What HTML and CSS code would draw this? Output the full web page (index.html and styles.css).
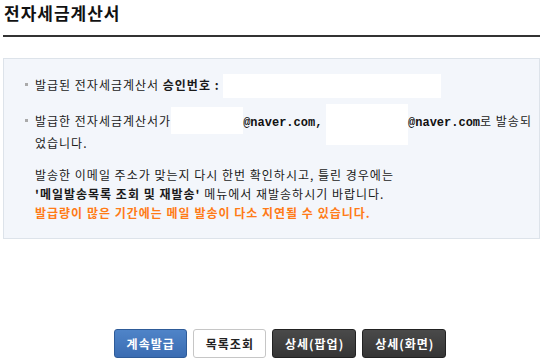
FILE: index.html
```html
<!doctype html>
<html>
<head>
	<title>전자세금계산서</title>
	<meta charset="utf-8">
	<link rel="stylesheet" href="styles.css">
</head>
<body>
	<h1 class="title">전자세금계산서</h1>

	<div class="notice">
		<ul class="notice-list">
			<li>발급된 전자세금계산서 <b>승인번호 :</b><span class="mask mask-no"></span></li>
			<li>발급한 전자세금계산서가<span class="mask mask-mail1"></span><span class="mail">@naver.com,</span> <span class="mask mask-mail2"></span><span class="mail">@naver.com</span>로 발송되<br>었습니다.</li>
		</ul>
		<p class="notice-text">
			발송한 이메일 주소가 맞는지 다시 한번 확인하시고, 틀린 경우에는<br>
			<b>'메일발송목록 조회 및 재발송'</b> 메뉴에서 재발송하시기 바랍니다.<br>
			<b class="warn">발급량이 많은 기간에는 메일 발송이 다소 지연될 수 있습니다.</b>
		</p>
	</div>

	<div class="buttons">
		<a href="#" class="btn btn-blue">계속발급</a>
		<a href="#" class="btn btn-white">목록조회</a>
		<a href="#" class="btn btn-dark">상세(팝업)</a>
		<a href="#" class="btn btn-dark">상세(화면)</a>
	</div>
</body>
</html>
```

FILE: styles.css
```css
html, body { margin: 0px; padding: 0px }
body {
	padding: 0px 1px 0px 3px;
	font-family: "Noto Sans CJK KR", "Noto Sans", sans-serif;
	font-size: 12px;
	letter-spacing: 1px;
	color: #1a1a1a;
	background: #fff;
}
.title {
	margin: 0px;
	padding: 3px 0px 12px 1px;
	font-size: 17px;
	line-height: 20px;
	font-weight: bold;
	letter-spacing: 1px;
	color: #111;
	border-bottom: 2px solid #333;
}
.notice {
	margin-top: 21px;
	padding: 16px 6px 16px 0px;
	background-color: #f3f6fb;
	border: 1px solid #dde3ea;
	line-height: 19px;
}
.notice-list {
	list-style: none;
	margin: 0px;
	padding: 0px 0px 0px 31px;
}
.notice-list li {
	position: relative;
	margin-bottom: 17px;
}
.notice-list li:last-child { margin-bottom: 0px }
.notice-list li::before {
	content: "";
	position: absolute;
	left: -10px;
	top: 8px;
	width: 3px;
	height: 3px;
	background-color: #aaa;
}
.notice-text {
	margin: 13px 0px 0px 0px;
	padding-left: 31px;
}
.mail {
	font-family: "Liberation Mono", monospace;
	font-weight: bold;
	letter-spacing: 0px;
	color: #111;
}
.warn { color: #ff7b17 }
.mask {
	display: inline-block;
	vertical-align: top;
	background-color: #fff;
}
.mask-no {
	width: 218px;
	height: 24px;
	margin: -1px 0px -4px 3px;
}
.mask-mail1 {
	width: 72px;
	height: 27px;
	margin: -4px 0px -4px 0px;
}
.mask-mail2 {
	width: 82px;
	height: 41px;
	margin: -7px 0px -15px 0px;
}
.buttons {
	display: flex;
	justify-content: center;
	gap: 6px;
	margin-top: 90px;
	padding-left: 17px;
}
.btn {
	display: block;
	box-sizing: border-box;
	height: 29px;
	padding: 0px 11px 0px 12px;
	line-height: 27px;
	font-size: 12px;
	font-weight: bold;
	text-decoration: none;
	border-radius: 3px;
	border: 1px solid;
}
.btn-blue {
	background: linear-gradient(#4f84c8, #3a6cb2);
	border-color: #2e5b98;
	color: #fff;
}
.btn-white {
	background-color: #fff;
	border-color: #c6c6c6;
	color: #222;
}
.btn-dark {
	background: linear-gradient(#4a4a4a, #353535);
	border-color: #222;
	color: #fff;
}
```
